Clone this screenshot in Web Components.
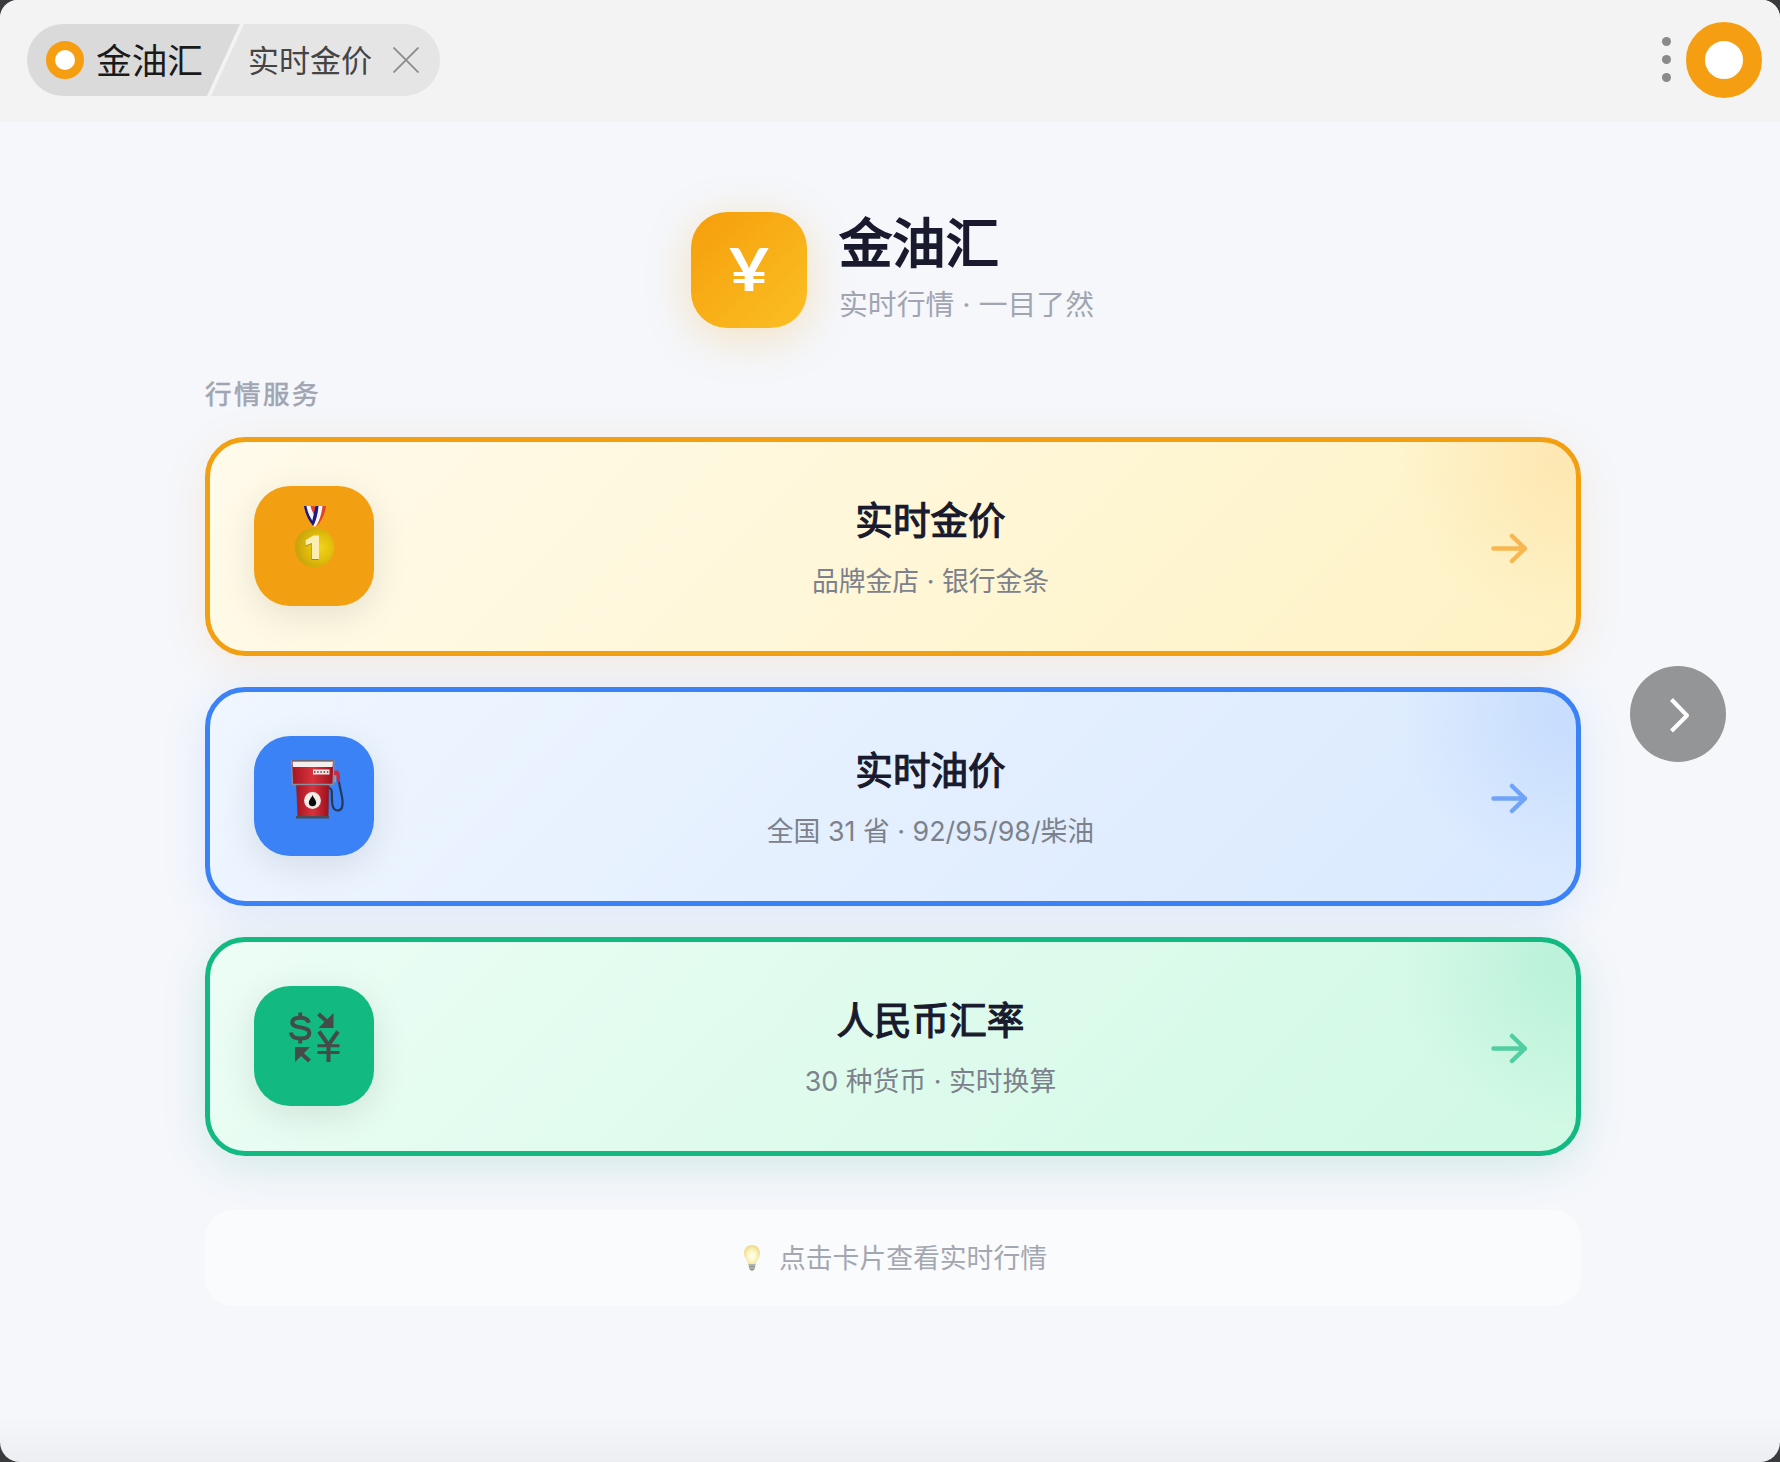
<!DOCTYPE html>
<html lang="zh-CN">
<head>
<meta charset="UTF-8">
<title>金油汇</title>
<style>
    html {
        background: #3a3b3d;
    }
    body {
        margin: 0;
        font-family: Inter, "Noto Sans CJK SC", sans-serif;
    }
</style>
</head>
<body>
<gold-app></gold-app>

<script>
class RingLogo extends HTMLElement {
    constructor() {
        super();
        this.attachShadow({ mode: "open" }).innerHTML = `
        <style>
        :host {
            display: block;
            box-sizing: border-box;
            flex: none;
            width: var(--ring, 38px);
            height: var(--ring, 38px);
            border: calc(var(--ring, 38px) / 4) solid #f59e12;
            border-radius: 50%;
            background: #fff;
        }
        </style>`;
    }
}
customElements.define("ring-logo", RingLogo);

class TopBar extends HTMLElement {
    constructor() {
        super();
        this.attachShadow({ mode: "open" }).innerHTML = `
        <style>
        :host {
            display: flex;
            align-items: center;
            justify-content: space-between;
            box-sizing: border-box;
            height: 122px;
            padding: 0 18px 2px 27px;
            background: #f3f3f3;
        }
        .tabs {
            display: flex;
            height: 72px;
            border-radius: 36px;
            overflow: hidden;
        }
        .tab {
            display: flex;
            align-items: center;
            box-sizing: border-box;
            white-space: nowrap;
        }
        .tab span {
            padding-bottom: 3px;
        }
        .home {
            width: 213px;
            padding-left: 19px;
            gap: 12px;
            background: #dadada;
            color: #1a1a1a;
            font-size: 35.7px;
            clip-path: polygon(0 0, 100% 0, 180px 100%, 0 100%);
        }
        .page {
            width: 233px;
            margin-left: -33px;
            padding-left: 41px;
            gap: 21px;
            background: #e5e5e5;
            color: #444;
            font-size: 31px;
            clip-path: polygon(37px 0, 100% 0, 100% 100%, 4px 100%);
        }
        .right {
            display: flex;
            align-items: center;
            gap: 15px;
        }
        .dots {
            display: flex;
            flex-direction: column;
            gap: 9px;
            padding-bottom: 2px;
        }
        .dots i {
            width: 9px;
            height: 9px;
            border-radius: 50%;
            background: #8a8a8a;
        }
        svg {
            display: block;
        }
        </style>
        <div class="tabs">
            <div class="tab home"><ring-logo></ring-logo><span>金油汇</span></div>
            <div class="tab page">
                <span>实时金价</span>
                <svg width="26" height="26" viewBox="0 0 26 26" stroke="#8c8c8c" stroke-width="1.8"><path d="M.5 .5 25.5 25.5M25.5 .5 .5 25.5"/></svg>
            </div>
        </div>
        <div class="right">
            <div class="dots"><i></i><i></i><i></i></div>
            <ring-logo style="--ring:76px"></ring-logo>
        </div>`;
    }
}
customElements.define("top-bar", TopBar);

class BrandHeader extends HTMLElement {
    constructor() {
        super();
        this.attachShadow({ mode: "open" }).innerHTML = `
        <style>
        :host {
            display: flex;
            justify-content: center;
            gap: 32px;
            height: 116px;
        }
        .logo {
            display: flex;
            align-items: center;
            justify-content: center;
            width: 116px;
            height: 116px;
            border-radius: 36px;
            background: linear-gradient(135deg, #f59e0b, #fbbf24);
            box-shadow: 0 9px 45px rgba(245, 158, 11, .25);
            color: #fff;
            font-family: Lato, sans-serif;
            font-size: 59px;
            font-weight: 700;
        }
        .logo span {
            padding-bottom: 4px;
            transform: scaleX(1.17);
        }
        h1 {
            margin: 0;
            font-size: 53.3px;
            line-height: 64px;
            font-weight: 400;
            -webkit-text-stroke: 1.9px;
            color: #1a1a2e;
        }
        p {
            margin: 10px 0 0;
            font-size: 28.8px;
            line-height: 38px;
            color: #a0a5b1;
        }
        </style>
        <div class="logo"><span>¥</span></div>
        <div>
            <h1>金油汇</h1>
            <p>实时行情 · 一目了然</p>
        </div>`;
    }
}
customElements.define("brand-header", BrandHeader);

class ServiceCard extends HTMLElement {
    constructor() {
        super();
        this.attachShadow({ mode: "open" }).innerHTML = `
        <style>
        :host {
            position: relative;
            display: flex;
            align-items: center;
            box-sizing: border-box;
            height: 219px;
            padding: 0 45px 0 44px;
            border: 5px solid var(--accent);
            border-radius: 40px;
            background: linear-gradient(135deg, var(--from), var(--to));
            background-origin: border-box;
            box-shadow: 0 9px 45px var(--shadow);
        }
        .glow {
            position: absolute;
            inset: 0;
            border-radius: 35px;
            background: radial-gradient(circle at calc(100% - 12px) 20px, var(--glow) 20px, transparent 165px);
            opacity: .12;
        }
        .icon {
            width: 120px;
            height: 120px;
            margin-top: -1px;
            border-radius: 36px;
            background: var(--accent);
            box-shadow: 0 9px 36px rgba(0, 0, 0, .1);
        }
        .text {
            flex: 1;
            padding-top: 8px;
            text-align: center;
        }
        h2 {
            margin: 0;
            font-size: 37.6px;
            line-height: 50px;
            font-weight: 400;
            -webkit-text-stroke: 1.2px;
            color: #1a1a2e;
        }
        p {
            margin: 11px 0 0;
            font-size: 26.8px;
            line-height: 48px;
            color: #7c818b;
        }
        .arrow {
            display: block;
            opacity: .65;
            margin-top: 3px;
        }
        </style>
        <div class="glow"></div>
        <div class="icon"><slot name="icon"></slot></div>
        <div class="text">
            <h2><slot name="title"></slot></h2>
            <p><slot></slot></p>
        </div>
        <svg class="arrow" width="44" height="44" viewBox="0 0 44 44" fill="none" stroke="var(--glow)" stroke-width="4.5" stroke-linecap="round" stroke-linejoin="round">
            <path d="M6.500 22.500H38M25 10 37.800 22.500 25 35"/>
        </svg>`;
    }
}
customElements.define("service-card", ServiceCard);

class TipBar extends HTMLElement {
    constructor() {
        super();
        this.attachShadow({ mode: "open" }).innerHTML = `
        <style>
        :host {
            display: flex;
            align-items: center;
            justify-content: center;
            gap: 18px;
            height: 96px;
            padding-left: 4px;
            border-radius: 28px;
            background: rgba(255, 255, 255, .45);
            color: #a3a7b1;
            font-size: 26.8px;
        }
        span {
            padding-bottom: 3px;
        }
        svg {
            opacity: .65;
        }
        </style>
        <svg width="18" height="28" viewBox="0 0 18 28">
            <defs>
                <radialGradient id="bulb" cy=".55">
                    <stop offset="0" stop-color="#fffef2"/>
                    <stop offset=".5" stop-color="#fff6a8"/>
                    <stop offset="1" stop-color="#ecd05c"/>
                </radialGradient>
            </defs>
            <path d="M9 1C4 1 1 4.500 1 9c0 5 3.600 6.800 4.500 12h7C13.400 15.800 17 14 17 9c0-4.500-3-8-8-8z" fill="url(#bulb)"/>
            <path d="M5.500 20h7l-.5 4.500L10 27H8l-2-2.500z" fill="#8d8c88"/>
            <path d="M6 22.500h6M7 25.200h4" stroke="#555" stroke-width=".9"/>
        </svg>
        <span><slot></slot></span>`;
    }
}
customElements.define("tip-bar", TipBar);

class NextButton extends HTMLElement {
    constructor() {
        super();
        this.attachShadow({ mode: "open" }).innerHTML = `
        <style>
        :host {
            display: block;
            width: 96px;
            height: 96px;
            border-radius: 50%;
            background: #949596;
        }
        </style>
        <svg width="96" height="96" viewBox="0 0 96 96" fill="none" stroke="#fff" stroke-width="4" stroke-linejoin="round">
            <path d="M41.500 33.500 57 49.500 41.500 65"/>
        </svg>`;
    }
}
customElements.define("next-button", NextButton);

class GoldApp extends HTMLElement {
    constructor() {
        super();
        this.attachShadow({ mode: "open" }).innerHTML = `
        <style>
        :host {
            position: relative;
            display: block;
            height: 1462px;
            border-radius: 18px 18px 20px 20px;
            overflow: hidden;
            background: linear-gradient(transparent 1415px, rgba(0, 0, 0, .035)), #f5f7fb;
        }
        main {
            width: 1376px;
            margin: 0 0 0 205px;
            padding-top: 90px;
        }
        brand-header {
            margin-right: 1px;
        }
        .label {
            margin: 46px 0 23px;
            font-size: 26.5px;
            line-height: 40px;
            -webkit-text-stroke: .6px;
            letter-spacing: 2.5px;
            color: #a0a5b1;
        }
        .cards {
            display: flex;
            flex-direction: column;
            gap: 31px;
            margin-bottom: 54px;
        }
        .gold {
            --accent: #f39f12;
            --glow: #f59a16;
            --from: #fffbeb;
            --to: #fef2c4;
            --shadow: rgba(245, 130, 11, .11);
        }
        .oil {
            --accent: #3b82f6;
            --glow: #3b82f6;
            --from: #eff6ff;
            --to: #d9e9fe;
            --shadow: rgba(59, 130, 246, .13);
        }
        .fx {
            --accent: #12b981;
            --glow: #12b981;
            --from: #ecfdf5;
            --to: #d0f9e4;
            --shadow: rgba(16, 150, 129, .15);
        }
        next-button {
            position: absolute;
            top: 666px;
            right: 54px;
        }
        svg {
            display: block;
        }
        </style>
        <top-bar></top-bar>
        <main>
            <brand-header></brand-header>
            <div class="label">行情服务</div>
            <div class="cards">
                <service-card class="gold">
                    <svg slot="icon" width="120" height="120" viewBox="0 0 120 120">
                        <defs>
                            <radialGradient id="medal" cx=".65" cy=".5" r=".6">
                                <stop offset="0" stop-color="#f2d31c"/>
                                <stop offset=".5" stop-color="#e3bf0c"/>
                                <stop offset="1" stop-color="#cba30b"/>
                            </radialGradient>
                        </defs>
                        <path d="M50 20h5.500l5.500 14-1.500 6.500C54 34 51 27 50 20z" fill="#1c1a80"/>
                        <path d="M52.500 20h5l4.500 10-2.500 6c-3.500-4-6-10-7-16z" fill="#f6f4f6"/>
                        <path d="M56.500 20h4l2.500 5-1.500 5.500c-2.500-3-4-6.500-5-10.500z" fill="#e0432b"/>
                        <path d="M61.500 20h3.500c-.5 8-2 15-4.500 20.500L58 36z" fill="#1c1a80"/>
                        <path d="M64.500 20h5c-1 8-4.500 16-8 20.500h-2.500c3-5.500 5-13 5.500-20.500z" fill="#f6f4f6"/>
                        <path d="M68.500 20H72c-1 8-4.500 15.500-9.500 20.500 3-6 5.200-13 6-20.500z" fill="#e0432b"/>
                        <circle cx="60.500" cy="61.500" r="19.800" fill="url(#medal)"/>
                        <path d="M59 50.500H64.500V74h-7V58l-6.500 2.500v-5.200z" fill="#a98a05"/>
                        <path d="M59.500 49.500H65V73h-7V57l-6.500 2.500v-5.200z" fill="#fbeeb0"/>
                    </svg>
                    <span slot="title">实时金价</span>品牌金店 · 银行金条
                </service-card>
                <service-card class="oil">
                    <svg slot="icon" width="120" height="120" viewBox="0 0 120 120">
                        <defs>
                            <linearGradient id="pump">
                                <stop offset="0" stop-color="#a31522"/>
                                <stop offset=".5" stop-color="#d8333c"/>
                                <stop offset="1" stop-color="#9b101d"/>
                            </linearGradient>
                        </defs>
                        <path d="M75 52c4 1 2.500 5 3 13 .3 6 2 9.500 5.500 9.500 4.500 0 5.500-4 5-10-.8-8-4-16-4.500-27" fill="none" stroke="#25395c" stroke-width="2.2"/>
                        <path d="M79.500 34.500h4c2 1 2.800 5 2.500 11l-2.500 1.500-1-5-3 3z" fill="#c52b43"/>
                        <path d="M79.500 39l3 .5-.5 7h-2.500z" fill="#8e98b1"/>
                        <path d="M42.500 49h32.500L74 81H44z" fill="url(#pump)" stroke="#6e3147" stroke-width=".8"/>
                        <path d="M42 80h33v2.500H42z" fill="#4b4d58"/>
                        <path d="M37.500 24.500h42.500L79 48.500H38.500z" fill="url(#pump)" stroke="#8c8f9d" stroke-width="1.300"/>
                        <path d="M38.500 25.500h40.500l-.5 5.500H39z" fill="#f4eeee"/>
                        <path d="M38 24.500h41.500" stroke="#6d6870" stroke-width="1.500"/>
                        <path d="M59 33.500h16.500v5H59z" fill="#eee6e4"/>
                        <path d="M60 36h15" stroke="#8a5c5d" stroke-width="2" stroke-dasharray="1.500 1.700"/>
                        <circle cx="58.500" cy="64.500" r="8.400" fill="#f2ebe7"/>
                        <path d="M58.500 59c.8 2.500 3.700 5 3.700 7.500a3.700 3.700 0 0 1-7.400 0c0-2.500 2.900-5 3.700-7.500z" fill="#0b0b0b"/>
                    </svg>
                    <span slot="title">实时油价</span>全国 31 省 · 92/95/98/柴油
                </service-card>
                <service-card class="fx">
                    <svg slot="icon" width="120" height="120" viewBox="0 0 120 120" fill="#444b48" stroke="#444b48">
                        <path d="M54.800 36.800c-.8-3.500-3.800-5-8.500-5-5 0-8 1.600-8 4.600s2.800 4 8.300 5 8.700 2 8.700 5.500-3.300 5.600-8.900 5.600-9-2-9.500-6" fill="none" stroke-width="4"/>
                        <path d="M46.300 26.500v5M46.300 52v5.500" stroke-width="3.800"/>
                        <path d="M79.500 27v15H64.500zM41 61h15L41 76z" stroke="none"/>
                        <path d="M64.500 28 74 36.500M46 66.500l9.500 8.500" stroke-width="4"/>
                        <path d="M65 45.500 74.500 59 84 45.500M74.500 58v18" fill="none" stroke-width="4"/>
                        <path d="M63.500 59.800h22M63.500 66.500h22" fill="none" stroke-width="3"/>
                    </svg>
                    <span slot="title">人民币汇率</span>30 种货币 · 实时换算
                </service-card>
            </div>
            <tip-bar>点击卡片查看实时行情</tip-bar>
        </main>
        <next-button></next-button>`;
    }
}
customElements.define("gold-app", GoldApp);
</script>
</body>
</html>
